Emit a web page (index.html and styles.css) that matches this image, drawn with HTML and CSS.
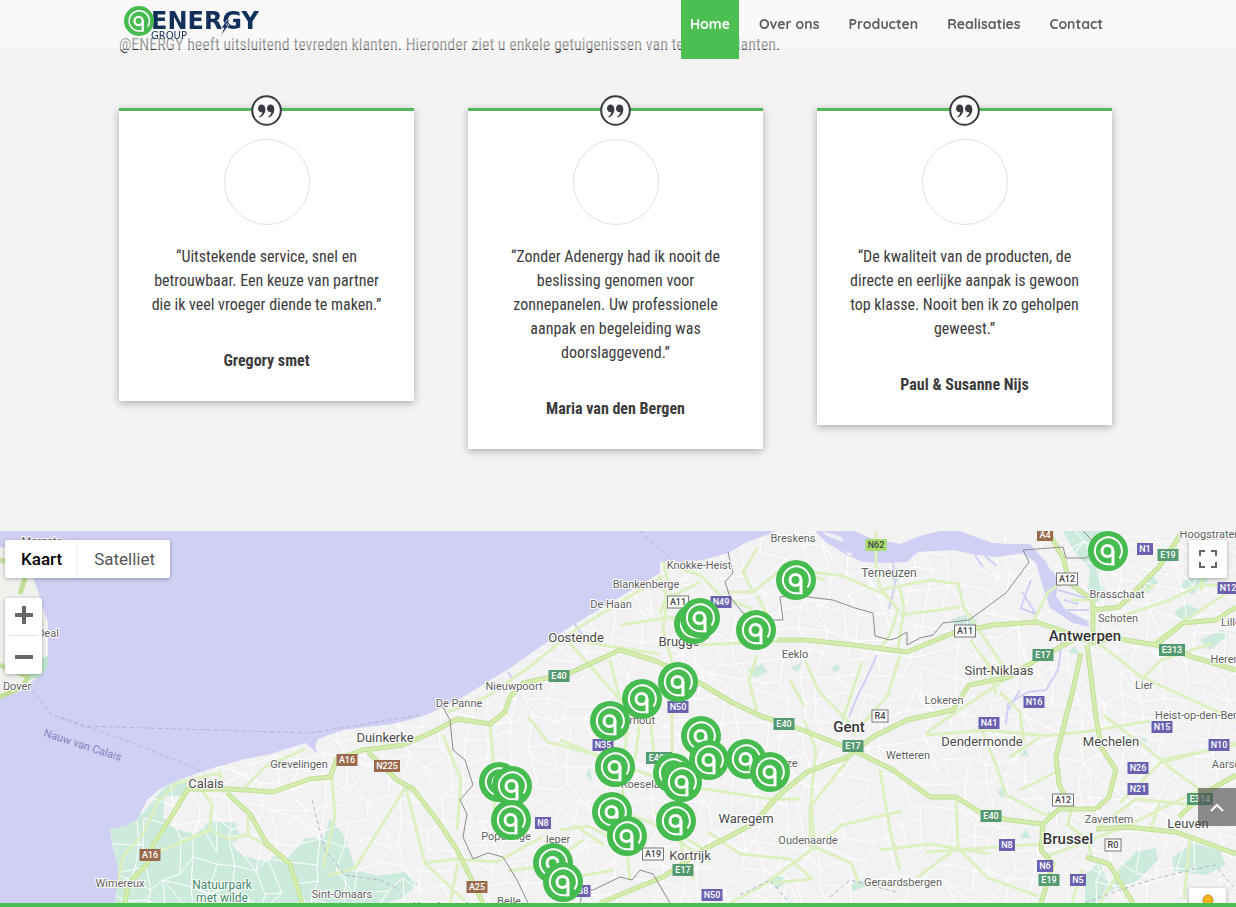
FILE: index.html
```html
<!DOCTYPE html>
<html lang="nl">
  <head>
    <meta charset="utf-8">
    <meta name="viewport" content="width=device-width, initial-scale=1">
    <title>@Energy Group</title>
    <link rel="stylesheet" href="styles.css">
  </head>
  <body>
    <svg class="defs" width="0" height="0" aria-hidden="true">
      <symbol id="pin" viewBox="-20 -20 40 40">
        <circle r="20" fill="#46bc50"/>
        <path d="M11.500 7.500A13.500 13.500 0 1 0 -1 13.300H5" fill="none" stroke="#fff" stroke-width="2"/>
        <circle cx="-.5" r="5.500" fill="none" stroke="#fff" stroke-width="3"/>
        <path d="M5 0V14.300" stroke="#fff" stroke-width="3"/>
      </symbol>
      <symbol id="quote" viewBox="0 0 31 31">
        <circle cx="15.500" cy="15.500" r="14.300" fill="#fff" stroke="#3b3b42" stroke-width="2"/>
        <path id="comma" d="M10.400 9.500c2.400 0 4 1.900 4 4.700 0 3.700-2.100 6.800-5.600 8.300l-.6-1c2-1.200 3-2.800 3.100-4.600-.4.200-.8.300-1.300.3-1.700 0-3-1.500-3-3.600 0-2.300 1.500-4.100 3.400-4.100z" fill="#3b3b42"/>
        <use href="#comma" x="9"/>
      </symbol>
    </svg>

    <header class="header">
      <div class="container header-inner">
        <a href="#" class="logo" aria-label="@Energy Group">
          <svg width="152" height="38" viewBox="0 0 152 38">
            <text x="32" y="25" class="logo-name">ENERGY</text>
            <path d="M108 16l-6 8h3l-4 9 9-12h-3l4-5z" fill="#12305a" stroke="#fafafa" stroke-width=".7"/>
            <text x="32" y="35" class="logo-sub">GROUP</text>
            <use href="#pin" x="5" y="2" width="30" height="30"/>
          </svg>
        </a>
        <nav class="nav">
          <a href="#" class="active">Home</a>
          <a href="#">Over ons</a>
          <a href="#">Producten</a>
          <a href="#">Realisaties</a>
          <a href="#">Contact</a>
        </nav>
      </div>
    </header>

    <section class="reviews">
      <div class="container">
        <p class="intro">@ENERGY heeft uitsluitend tevreden klanten. Hieronder ziet u enkele getuigenissen van tevreden klanten.</p>
        <div class="cards">
          <article class="card">
            <svg class="quote"><use href="#quote"/></svg>
            <div class="avatar"></div>
            <p>“Uitstekende service, snel en betrouwbaar. Een keuze van partner die ik veel vroeger diende te maken.”</p>
            <h4>Gregory smet</h4>
          </article>
          <article class="card">
            <svg class="quote"><use href="#quote"/></svg>
            <div class="avatar"></div>
            <p>“Zonder Adenergy had ik nooit de beslissing genomen voor zonnepanelen. Uw professionele aanpak en begeleiding was doorslaggevend.”</p>
            <h4>Maria van den Bergen</h4>
          </article>
          <article class="card">
            <svg class="quote"><use href="#quote"/></svg>
            <div class="avatar"></div>
            <p>“De kwaliteit van de producten, de directe en eerlijke aanpak is gewoon top klasse. Nooit ben ik zo geholpen geweest.”</p>
            <h4>Paul &amp; Susanne Nijs</h4>
          </article>
        </div>
      </div>
    </section>

    <section class="map">
      <svg class="map-canvas" viewBox="0 531 1236 372" preserveAspectRatio="xMidYMid slice">
        <defs>
          <path id="coast" d="M115 903L118 880 118 867 113 848 110 829 125 826 137 820 147 800 157 791 167 785 187 777 207 770 220 766 245 759 267 755 283 750 305 743 314 750 318 739 343 730 393 724 420 717 433 712 463 697 510 668 543 645 573 625 620 597 640 585 660 573 660 562 680 562 703 560 728 553 747 542 770 534 775 531H1236V903z"/>
          <clipPath id="land"><use href="#coast"/></clipPath>
        </defs>
        <rect y="531" width="1236" height="372" fill="#cfd0f4"/>
        <use href="#coast" fill="#f2f2f2"/>
        <path d="M0 547L27 550 33 577 40 597 48 623 48 657 43 672 23 690 0 698z" fill="#f0f2ee"/>
        <path d="M35 660l13-4-1 12-6 8-16 6z" fill="#bfe6d0"/>

        <g class="park" clip-path="url(#land)">
          <path d="M108 825l35-12 25-30 20-4-3 16-20 2-2 20 12 12 20 5 15-12 25 0 5 14-8 10 12 10 22 6 8-6 14 2 18-20 18 0 6-20 14 18 12 34 22 6 26-4 14 12-16 14-16 5H108z"/>
          <path d="M1063 531h45l2 24-12 20 8 18-10 10-8-14 2-20-16-18zM1118 870l18-18 20-4 2 12-20 20-30 12zM1172 858l20-15 28 8 6 14-20 10-32-4zM1085 875l14-12 10 20-12 20h-12zM1138 585l14-10 6 8-12 12zM1180 585l22-18 14 6-24 22zM1174 612l12-8 14 6-18 12zM1200 640l22-10 8 4-20 16zM950 620l20-7 8 9-18 7zM1020 838l6-10 4 10z"/>
          <path d="M683 624l12 8-8 10zM790 668l12-6-4 10zM748 670l14-6 6 8-14 6zM586 775l4-8 2 14zM768 880l12-5 10 6-14 8zM850 885l14-7 4 8-16 5zM890 578l8-8 6 6-8 6zM830 670l6-6 5 4-5 4zM1067 652l8-6 4 8zM1020 755l6-6 3 8zM1140 740l5-4 2 6zM997 792l8-6-2 12z"/>
        </g>

        <g id="minor" class="minor" clip-path="url(#land)"></g>

        <!-- Schelde and the waterways around Antwerpen -->
        <g fill="#cfd0f4">
          <path d="M815 531L827 543 847 555 863 562 887 563 907 562 918 552 953 550 976 555 999 557 1023 553 1036 563 1043 587 1050 608 1073 623 1089 627 1088 621 1066 610 1056 596 1058 585 1046 562 1030 544 1008 544 993 543 970 535 960 531z"/>
          <path d="M822 531l20 6 1 5-16-6zM845 551l8 3-3 2zM855 531h85l-20 5-20 8-30-6z" fill="#f2f2f2"/>
        </g>
        <g class="water">
          <path d="M1022 592l14 22-16-6M1031 580l-10 28M1058 590l28 8M1064 600l14 4M1060 587l-8-16M1067 610l22 0M985 556l12 10M975 555l8 12M1062 640l-4 30-12 20-18 2-20 12-2 20M1020 690l-12 20M877 655l-10 22-10 20-8 20M893 560l2 25-6 24M573 622l9 12M508 672l4 6M310 738l6 14"/>
        </g>

        <g class="secondary" clip-path="url(#land)">
          <path d="M118 880l6-25 20-22 14-32 20-18 42-10 3 20M202 790l10 14-2 26-35 15-20 8M248 815v20l-20 4-16-8M248 835l25 15"/>
          <path d="M245 787l20-20 40-18M332 777l3 40-12 50M405 788l-50 80-28 8M406 788l14 55 5 20 40 38M425 863l32-4 40 3 45-25M457 830l4-50-18-45M450 903l8-40M490 724l4 45 0 40"/>
          <path d="M448 712l40-16 40-28 50-40 82-50M567 640l25 28 30 34M574 640l46 8 40 6M620 625l52-8 14 12M528 717l20 25 45 12 30 18M610 660l10 40"/>
          <path d="M660 575l7 25-4 30 10 35 0 30M668 565l32 10 22 22 30 12M700 582l-35 18-5 14M725 592l28 0 30-24 60 8 45 20M753 592l-10-20 15-25M805 575l20 5M757 595l5 10 8 15M700 645l80-4M757 655l-8 26 8 30M663 560l10 45M650 716l6 60M672 700l0 50 6 60 4 40 12 30"/>
          <path d="M876 531v35l4 22 18 22-8 25-12 16M900 588l4 20-6 40M880 590l50-10 28 4 6 24 30 44 16 26M900 615l60-8M862 662l-20 60M900 655l-12 40-35 40M805 660l14 32 30 30M790 680l14 26"/>
          <path d="M815 850l-4-50 5-50-12-30M730 903l30-16 42-30 40-32 60-14M640 720l-5 40M704 850l-30-20-20-18M620 812l30 10 30 20 30 20M708 832l32 22 50 5 22 20-40 4M806 843l45 20 8 20M880 850l50-6 60 10M880 770l10 60 10 40M850 757l-40 50 0 40"/>
          <path d="M560 830l28-4 20 10 25 10M604 845l-30-20M614 870l-34 6M583 840l-35 25-40 6M628 720l-6 60 4 60 4 40M560 740l60 25 60 20 90 14 30 0"/>
          <path d="M1033 622l15-30 20-14M1093 600l-22 0M1119 607l35-22M1093 640l25 18 22 18 30 14 66 30M1141 680l20-20 50-16M1150 645l40-28 46-30M1205 531l-4 60M1110 620l60-20 30-15h36M1103 715l40 30 30 25 30 22M1160 760l76-15M1120 803l40-40 76-20M1096 829l40-30 60 6M1045 857l80-30 80-40M926 852l116-8"/>
          <path d="M970 640l18 24 8 30M1009 677l-60 40-23 16M1000 692l20 20 4 30M926 735l60-5 60 6 44-5 60-10M980 725l16 40 10 30 40 20M956 797l2 50-40 30M958 848l30 30 50 18M1010 757l30-20M1020 790l40-20"/>
          <path d="M1072 805l-4 20 20 15 4 20M1082 870l-10 33M1190 840l-6 60M1150 831l10-30M1120 870l-20 33M1050 812l-10 20"/>
        </g>

        <g class="highway" clip-path="url(#land)">
          <path id="roads" d="M125 903L128 884 147 864 153 845 173 814 188 789 230 789 273 792 310 779 330 777 337 759 363 750 403 745 433 732 457 719 490 724 505 712 510 697 523 683 570 673 620 650 653 660 670 667 700 683 733 703 763 717 787 724 820 737 853 750 893 770 930 797 956 797 983 814 1009 820 1043 824 1059 809 1096 809M227 793L250 814 267 844 290 864 302 903M368 752L397 780 413 789 440 824 457 850 483 903M600 903L663 877 703 850 753 824 777 797 807 772 847 757 873 737 907 720 953 710 969 685 1009 677 1036 660 1073 640M777 640L807 640 853 645 907 652 953 633 993 625 1036 622 1069 633 1093 643 1113 638 1156 645 1183 623 1216 620 1236 607M1093 643L1093 610 1119 607 1159 567 1183 531M1048 531L1064 560 1069 583 1093 600 1093 612M1087 645L1096 717 1101 747 1116 770 1109 797 1096 809M1081 653L1073 690 1066 717 1056 757 1059 784 1069 804M1156 645L1193 657 1236 670M1096 829L1126 827 1176 832 1236 854M1086 857L1109 864 1133 903M1043 824L1041 850 1053 864 1041 903M1179 817L1203 794 1236 775"/>
          <use href="#roads" class="core"/>
        </g>
        <path class="highway" d="M0 697l22-10 6-10-28-12M0 560l28 8-8 26"/>

        <g class="border">
          <path d="M443 707L450 720 453 750 465 760 473 785 460 800 467 814 463 837 473 859 488 853 503 857 517 880 528 903M580 903L583 890 593 890 620 877 632 880 640 870 653 874 670 903"/>
          <path d="M728 552L733 573 725 582 730 597 743 613 765 620 783 620 780 597 793 595 833 600 855 608 873 613 875 636 890 640 897 638 907 632 907 645 920 638 933 635 943 623 969 620 1006 593 1029 562 1023 550 1063 547 1066 558 1086 558 1100 548 1083 531"/>
        </g>
        <path class="ferry" d="M32 690L50 714 82 726 310 733 420 715M60 717L130 742 180 762 205 773M640 531L672 560M312 800L325 850 345 875 380 880 400 890M740 895L770 880 790 903M830 897L850 880 900 893M1085 903L1120 890 1150 880 1190 870 1215 865 1236 890"/>

        <g id="shields" class="shields"></g>
        <g id="places" class="places"></g>
        <text class="sea" transform="translate(43 736) rotate(18)">Nauw van Calais</text>
        <g id="markers"></g>
      </svg>

      <div class="map-type">
        <button type="button" class="selected">Kaart</button>
        <button type="button">Satelliet</button>
      </div>
      <div class="zoom">
        <button type="button" aria-label="Inzoomen">
          <svg width="18" height="18"><path d="M9 0v18M0 9h18" stroke="#666" stroke-width="4"/></svg>
        </button>
        <button type="button" aria-label="Uitzoomen">
          <svg width="18" height="18"><path d="M0 9h18" stroke="#666" stroke-width="4"/></svg>
        </button>
      </div>
      <button type="button" class="fullscreen" aria-label="Volledig scherm">
        <svg width="18" height="18"><path d="M1 6V1H6M12 1H17V6M17 12V17H12M6 17H1V12" fill="none" stroke="#666" stroke-width="2"/></svg>
      </button>
      <button type="button" class="pegman" aria-label="Street View">
        <svg width="14" height="24"><circle cx="7" cy="6" r="5" fill="#fbb41a" stroke="#c98a1b"/><path d="M3 11h8l-1 12H4z" fill="#fbb41a"/></svg>
      </button>
      <a href="#" class="to-top" aria-label="Naar boven">
        <svg width="16" height="10"><path d="M2 9l6-6 6 6" fill="none" stroke="#fff" stroke-width="2"/></svg>
      </a>
    </section>

    <script src="script.js"></script>
  </body>
</html>
```
FILE: styles.css
```css
* {
  box-sizing: border-box;
}
body {
  margin: 0;
  background: #f3f3f3;
  color: #3c3c3c;
  font-family: "Roboto Condensed", "Liberation Sans Narrow", Roboto, sans-serif;
  font-size: 16px;
  line-height: 24px;
}
button {
  border: 0;
  padding: 0;
  background: #fff;
  font-family: Roboto, Arial, sans-serif;
}
.defs {
  position: absolute;
}
.container {
  max-width: 998px;
  margin: 0 auto;
  padding-right: 5px;
}

/* header */
.header {
  position: fixed;
  top: 0;
  left: 0;
  right: 0;
  z-index: 10;
  height: 49px;
  background: rgba(255, 255, 255, 0.5);
}
.header-inner {
  display: flex;
  justify-content: space-between;
  align-items: flex-start;
}
.logo {
  padding-top: 4px;
}
.logo svg {
  display: block;
}
.logo-name {
  font: bold 24px "DejaVu Sans", sans-serif;
  fill: #12305a;
}
.logo-sub {
  font: 10px "DejaVu Sans", sans-serif;
  fill: #12305a;
}
.nav {
  display: flex;
  gap: 11px;
}
.nav a {
  padding: 12px 9px 23px;
  color: #5e5e5e;
  font-family: Quicksand, Lato, sans-serif;
  font-size: 14px;
  font-weight: 700;
  text-decoration: none;
}
.nav a.active {
  background: #4cbf53;
  color: #fff;
}

/* testimonials */
.reviews {
  padding: 33px 0 82px;
}
.intro {
  margin: 0 0 51px;
}
.cards {
  display: grid;
  grid-template-columns: repeat(3, 1fr);
  gap: 54px;
  align-items: start;
}
.card {
  position: relative;
  padding: 28px;
  border-top: 3px solid #54b858;
  background: #fff;
  box-shadow: 0 2px 8px rgba(0, 0, 0, 0.3);
  text-align: center;
}
.quote {
  position: absolute;
  top: -16px;
  left: calc(50% - 16px);
  width: 31px;
  height: 31px;
}
.avatar {
  width: 86px;
  height: 86px;
  margin: 0 auto 20px;
  border: 1px solid #e2e2e2;
  border-radius: 50%;
}
.card p {
  margin: 0 0 32px;
}
.card h4 {
  margin: 0;
  font-size: 16px;
}

/* map */
.map {
  position: relative;
  height: 376px;
  overflow: hidden;
  border-bottom: 4px solid #4cbf53;
}
.map-canvas {
  display: block;
  width: 100%;
  height: 100%;
  font-family: Roboto, Arial, sans-serif;
}
.park {
  fill: #cdebdc;
}
.water, .minor, .secondary, .highway, .border, .ferry {
  fill: none;
  stroke-linejoin: round;
}
.water {
  stroke: #cfd0f4;
  stroke-width: 2;
}
.minor {
  stroke: #fff;
  stroke-width: 1;
}
.secondary {
  stroke: #dcf0c2;
  stroke-width: 3;
}
.highway {
  stroke: #c3e09a;
  stroke-width: 5;
}
.core {
  stroke: #d4edac;
  stroke-width: 3;
}
.border {
  stroke: #8c8c8c;
  stroke-width: 1;
}
.ferry {
  stroke: #b3b3cf;
  stroke-dasharray: 4 3;
}
.places text {
  fill: #5f5f5f;
  stroke: #fff;
  stroke-width: 2;
  paint-order: stroke;
  text-anchor: middle;
  font-size: 11px;
}
.places .mid {
  font-size: 12px;
}
.places .town {
  fill: #4a4a4a;
  font-size: 13px;
}
.places .city {
  fill: #333;
  font-size: 15px;
  font-weight: 500;
}
.places .nature {
  fill: #3f8a6d;
  font-size: 12px;
}
.sea {
  fill: #8580bd;
  font-size: 11px;
}
.shields text {
  fill: #fff;
  text-anchor: middle;
  font-size: 9px;
  font-weight: 500;
}
.shields .n rect { fill: #6a62b0; }
.shields .e rect { fill: #559a70; }
.shields .f rect { fill: #9a6a4c; }
.shields .g rect { fill: #a6dc6c; }
.shields .a rect { fill: #fff; stroke: #777; }
.shields .a text, .shields .g text { fill: #444; }

.map-type, .zoom, .fullscreen, .pegman {
  position: absolute;
  border-radius: 2px;
  background: #fff;
  box-shadow: 0 1px 4px rgba(0, 0, 0, 0.3);
}
.map-type {
  top: 9px;
  left: 5px;
  display: flex;
}
.map-type button {
  padding: 0 15px 0 16px;
  background: none;
  color: #565656;
  font-size: 17px;
  line-height: 38px;
}
.map-type button.selected {
  border-right: 1px solid #eee;
  color: #000;
  font-weight: 500;
}
.zoom {
  top: 67px;
  left: 5px;
  display: flex;
  flex-direction: column;
  width: 37px;
  padding: 0 4px;
}
.zoom button {
  height: 38px;
  padding-top: 4px;
}
.zoom button:first-child {
  padding: 0 0 4px;
  border-bottom: 1px solid #e6e6e6;
}
.fullscreen {
  top: 9px;
  right: 9px;
  width: 38px;
  height: 38px;
}
.fullscreen svg, .zoom svg {
  vertical-align: middle;
}
.pegman {
  top: 357px;
  right: 10px;
  width: 37px;
  height: 38px;
}
.to-top {
  position: absolute;
  top: 257px;
  right: 0;
  display: flex;
  align-items: center;
  justify-content: center;
  width: 38px;
  height: 38px;
  background: rgba(80, 80, 80, 0.65);
}
```
FILE: script.js
```js
var NS = 'http://www.w3.org/2000/svg';

function add(parent, tag, attrs, text) {
  var el = document.createElementNS(NS, tag);
  for (var key in attrs) el.setAttribute(key, attrs[key]);
  if (text) el.textContent = text;
  parent.appendChild(el);
  return el;
}

// name, x (centre), y (baseline), kind
var places = [
  ['Margate', 42, 545], ['Deal', 48, 637], ['Dover', 17, 690],
  ['Breskens', 793, 542], ['Knokke-Heist', 699, 569], ['Blankenberge', 646, 588],
  ['De Haan', 611, 608], ['Terneuzen', 889, 577, 'mid'], ['Eeklo', 795, 658],
  ['Nieuwpoort', 514, 690], ['De Panne', 459, 707], ['Grevelingen', 299, 768],
  ['Wimereux', 120, 887], ['Sint-Omaars', 342, 898], ['Hazebrouck', 442, 910],
  ['Belle', 509, 905], ['Poperinge', 506, 840], ['Ieper', 558, 843],
  ['Torhout', 636, 724], ['Deinze', 781, 767], ['Roeselare', 645, 788],
  ['Oudenaarde', 808, 844], ['Wetteren', 908, 759], ['Lokeren', 944, 704],
  ['Geraardsbergen', 903, 886], ['Zaventem', 1109, 823], ['Lier', 1144, 689],
  ['Brasschaat', 1117, 598], ['Schoten', 1118, 622], ['Hoogstraten', 1210, 538],
  ['Lille', 1231, 626], ['Herentals', 1234, 663], ['Heist-op-den-Berg', 1199, 719],
  ['Aarschot', 1234, 768],
  ['Calais', 206, 788, 'town'], ['Duinkerke', 385, 742, 'town'], ['Oostende', 576, 642, 'town'],
  ['Brugge', 679, 646, 'town'], ['Kortrijk', 690, 860, 'town'], ['Waregem', 746, 823, 'town'],
  ['Sint-Niklaas', 999, 675, 'town'], ['Dendermonde', 982, 746, 'town'],
  ['Mechelen', 1111, 746, 'town'], ['Leuven', 1188, 828, 'town'],
  ['Antwerpen', 1085, 641, 'city'], ['Brussel', 1068, 844, 'city'], ['Gent', 849, 732, 'city'],
  ['Natuurpark', 222, 889, 'nature'], ['met wilde', 222, 902, 'nature']
];

// road, x, y, colour
var shields = [
  ['N62', 876, 545, 'g'], ['A11', 678, 602, 'a'], ['N49', 721, 602, 'n'], ['N50', 678, 707, 'n'],
  ['E40', 559, 676, 'e'], ['N35', 603, 745, 'n'], ['A16', 347, 760, 'f'], ['N225', 387, 766, 'f'],
  ['A16', 150, 855, 'f'], ['A25', 477, 887, 'f'], ['N8', 543, 823, 'n'], ['N38', 580, 891, 'n'],
  ['E403', 659, 758, 'e'], ['E40', 784, 724, 'e'], ['R4', 880, 716, 'a'], ['E17', 853, 746, 'e'],
  ['N35', 738, 759, 'n'], ['A19', 653, 854, 'a'], ['E17', 683, 870, 'e'], ['N50', 712, 895, 'n'],
  ['A4', 1045, 535, 'f'], ['N1', 1145, 549, 'n'], ['E19', 1168, 555, 'e'], ['A12', 1067, 579, 'a'],
  ['N12', 1228, 588, 'n'], ['A11', 965, 631, 'a'], ['E17', 1043, 655, 'e'], ['E313', 1172, 650, 'e'],
  ['N16', 1034, 702, 'n'], ['N41', 989, 723, 'n'], ['N15', 1162, 727, 'n'], ['N10', 1219, 745, 'n'],
  ['N26', 1138, 768, 'n'], ['N21', 1138, 789, 'n'], ['A12', 1063, 800, 'a'], ['E314', 1200, 799, 'e'],
  ['E40', 991, 816, 'e'], ['N8', 1007, 845, 'n'], ['R0', 1113, 845, 'a'], ['N6', 1045, 866, 'n'],
  ['E19', 1049, 880, 'e'], ['N5', 1078, 880, 'n']
];

var markers = [
  [1108, 551], [796, 580], [756, 630], [694, 624], [700, 618], [678, 682], [642, 699], [610, 721],
  [701, 736], [746, 759], [709, 760], [770, 772], [615, 767], [673, 773], [682, 782], [612, 812],
  [627, 836], [676, 821], [499, 782], [512, 786], [511, 820], [553, 863], [563, 882]
];

places.forEach(function (p) {
  add(document.getElementById('places'), 'text', { x: p[1], y: p[2], 'class': p[3] || 'village' }, p[0]);
});

shields.forEach(function (s) {
  var g = add(document.getElementById('shields'), 'g', { 'class': s[3] });
  var w = s[0].length * 5 + 6;
  add(g, 'rect', { x: s[1] - w / 2, y: s[2] - 6, width: w, height: 12 });
  add(g, 'text', { x: s[1], y: s[2] + 3 }, s[0]);
});

markers.forEach(function (m) {
  add(document.getElementById('markers'), 'use', { href: '#pin', x: m[0] - 20, y: m[1] - 20, width: 40, height: 40 });
});

// local roads: an irregular mesh drawn from a fixed seed
var seed = 7;
function rnd() {
  seed = (seed * 16807) % 2147483647;
  return seed / 2147483647;
}
var step = 21, cols = 56, rows = 20, grid = [], d = '';
for (var r = 0; r < rows; r++) {
  grid.push([]);
  for (var c = 0; c < cols; c++) {
    grid[r].push([Math.round(100 + c * step + rnd() * 19), Math.round(520 + r * step + rnd() * 19)]);
  }
}
for (r = 0; r < rows - 1; r++) {
  for (c = 0; c < cols - 1; c++) {
    if (rnd() < 0.75) d += 'M' + grid[r][c] + 'L' + grid[r][c + 1];
    if (rnd() < 0.75) d += 'M' + grid[r][c] + 'L' + grid[r + 1][c];
    if (rnd() < 0.2) d += 'M' + grid[r][c] + 'L' + grid[r + 1][c + 1];
  }
}
add(document.getElementById('minor'), 'path', { d: d });
```
